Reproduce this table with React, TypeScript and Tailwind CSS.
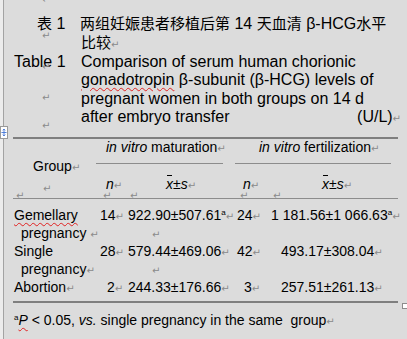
import React from 'react';

const FONT = "font-['Liberation_Sans','Noto_Sans_CJK_SC',sans-serif]";

// Word paragraph mark
function Ret({ className = '' }: { className?: string }) {
  return (
    <span className={`text-[10px] leading-none text-[#8a8a8a] font-['DejaVu_Sans',sans-serif] not-italic ${className}`}>↵</span>
  );
}

function Sup() {
  return <span className="relative top-[-5px] text-[8px] leading-none">a</span>;
}

function Cjk({ children }: { children: React.ReactNode }) {
  return <span className="text-[15px] font-['Noto_Sans_CJK_SC',sans-serif]">{children}</span>;
}

function XBar() {
  return (
    <span>
      <span className="relative italic">
        <span className="absolute left-[1px] top-[-1px] h-[1px] w-[5px] bg-black" />x
      </span>
      ±<span className="italic">s</span>
    </span>
  );
}

function MoveHandle() {
  return (
    <div className="absolute left-[-4px] top-[126px] w-[8px] h-[13px] bg-white border border-[#9a9a9a] flex items-center justify-center">
      <svg width="7" height="9" viewBox="0 0 7 9" fill="none" stroke="#3b6fd4" strokeWidth="1">
        <path d="M3.5 0.5v8M0.5 4.5h6M2 2l1.5-1.5L5 2M2 7l1.5 1.5L5 7" />
      </svg>
    </div>
  );
}

const cols = 'grid grid-cols-[83px_30px_109px_33px_130px] whitespace-nowrap';
const wavy = 'underline decoration-wavy decoration-[#e02020] decoration-1 underline-offset-2';

export default function App() {
  return (
    <div className={`w-[407px] h-[339px] overflow-hidden bg-[#ececec] pl-[3px] text-[14px] text-black ${FONT}`}>
      <div className="relative h-full border-l border-[#a3a3a3] bg-[#dcdcdc]">
        {/* empty paragraph marks in the caption's left cell */}
        <Ret className="absolute left-[38px] top-[-5px]" />
        <Ret className="absolute left-[38px] top-[31px]" />
        <Ret className="absolute left-[38px] top-[62px]" />
        <Ret className="absolute left-[38px] top-[93px]" />
        <Ret className="absolute left-[38px] top-[121px]" />

        <MoveHandle />

        {/* caption */}
        <div className="pt-[14px] text-[16px] leading-[18.4px]">
          <div className="grid grid-cols-[76px_1fr] whitespace-nowrap">
            <div className="pl-[33px]"><Cjk>表</Cjk> 1</div>
            <div><Cjk>两组妊娠患者移植后第</Cjk> 14 <Cjk>天血清</Cjk> β-HCG<Cjk>水平</Cjk></div>
          </div>
          <div className="grid grid-cols-[76px_1fr]">
            <div />
            <div className="pl-[1px]"><Cjk>比较</Cjk><Ret /></div>
          </div>
          <div className="grid grid-cols-[76px_1fr]">
            <div className="pl-[10px]">Table 1</div>
            <div className="pl-[1px]">Comparison of serum human chorionic</div>
          </div>
          <div className="grid grid-cols-[76px_1fr]">
            <div />
            <div className="pl-[1px] whitespace-nowrap">
              <span className={wavy}>gonadotropin</span> β-subunit (β-HCG) levels of
            </div>
          </div>
          <div className="grid grid-cols-[76px_1fr]">
            <div />
            <div className="pl-[1px]">pregnant women in both groups on 14 d</div>
          </div>
          <div className="grid grid-cols-[76px_1fr]">
            <div />
            <div className="pl-[1px] pr-[6px] flex justify-between">
              <span>after embryo transfer</span>
              <span>(U/L)<Ret /></span>
            </div>
          </div>
        </div>

        {/* table */}
        <div className="mt-[11px] ml-[9px] w-[385px]">
          <div className="h-[2px] bg-[#7f7f7f]" />
          <div className={`${cols} h-[59px]`}>
            <div className="row-span-2 flex flex-col items-start pl-[20px] pt-[17px]">
              <span>Group<Ret /></span>
              <Ret className="mt-[7px] ml-[10px]" />
            </div>
            <div className="col-span-2 h-[25px] mr-[12px] border-b border-[#8c8c8c] flex items-end pl-[10px] pb-[5px]">
              <span><span className="italic">in vitro</span> maturation<Ret /></span>
            </div>
            <div className="col-span-2 h-[25px] mr-[7px] border-b border-[#8c8c8c] flex items-end pl-[24px] pb-[5px]">
              <span><span className="italic">in vitro</span> fertilization<Ret /></span>
            </div>
            <div className="pl-[10px] pt-[6px] italic">n<Ret /></div>
            <div className="pl-[40px] pt-[6px]"><XBar /><Ret /></div>
            <div className="pl-[8px] pt-[6px] italic">n<Ret /></div>
            <div className="pl-[54px] pt-[6px]"><XBar /><Ret /></div>
          </div>
          <div className="relative h-[1px] bg-[#8c8c8c]">
            <Ret className="absolute left-[3px] top-[-7px] text-[8px]" />
            <Ret className="absolute left-[90px] top-[-7px] text-[8px]" />
            <Ret className="absolute left-[117px] top-[-7px] text-[8px]" />
            <Ret className="absolute left-[227px] top-[-7px] text-[8px]" />
            <Ret className="absolute left-[260px] top-[-7px] text-[8px]" />
          </div>

          <div className="pt-[7px] leading-[18px]">
            <div className={cols}>
              <div className="pl-[1px]">
                <span className={wavy}>Gemellary</span>
                <div className="pl-[7px]">pregnancy <Ret /></div>
              </div>
              <div className="pl-[4px]">14<Ret /></div>
              <div className="pl-[2px]">
                922.90±507.61<Sup /><Ret />
                <div className="pl-[24px]"><Ret /></div>
              </div>
              <div className="pl-[2px]">24<Ret /></div>
              <div className="pl-[3px]">1 181.56±1 066.63<Sup /><Ret /></div>
            </div>
            <div className={cols}>
              <div className="pl-[1px]">
                Single
                <div className="pl-[7px]">pregnancy<Ret /></div>
              </div>
              <div className="pl-[4px]">28<Ret /></div>
              <div className="pl-[2px]">
                579.44±469.06<Ret />
                <div className="pl-[24px]"><Ret /></div>
              </div>
              <div className="pl-[2px]">42<Ret /></div>
              <div className="pl-[13px]">493.17±308.04<Ret /></div>
            </div>
            <div className={cols}>
              <div className="pl-[1px]">Abortion<Ret /></div>
              <div className="pl-[11px]">2<Ret /></div>
              <div className="pl-[2px]">244.33±176.66<Ret /></div>
              <div className="pl-[9px]">3<Ret /></div>
              <div className="pl-[13px]">257.51±261.13<Ret /></div>
            </div>
          </div>
          <div className="relative mt-[5px] h-[2px] bg-[#7f7f7f]">
            <div className="absolute right-[-10px] top-[2px] w-[6px] h-[6px] bg-white border border-[#8c8c8c]" />
          </div>
          <div className="pt-[8px] pl-[1px] leading-[18px] whitespace-nowrap">
            <Sup />
            <span className={`italic ${wavy}`}>P</span> &lt; 0.05, <span className="italic">vs.</span> single pregnancy in the same&nbsp; group<Ret />
          </div>
        </div>
      </div>
    </div>
  );
}
